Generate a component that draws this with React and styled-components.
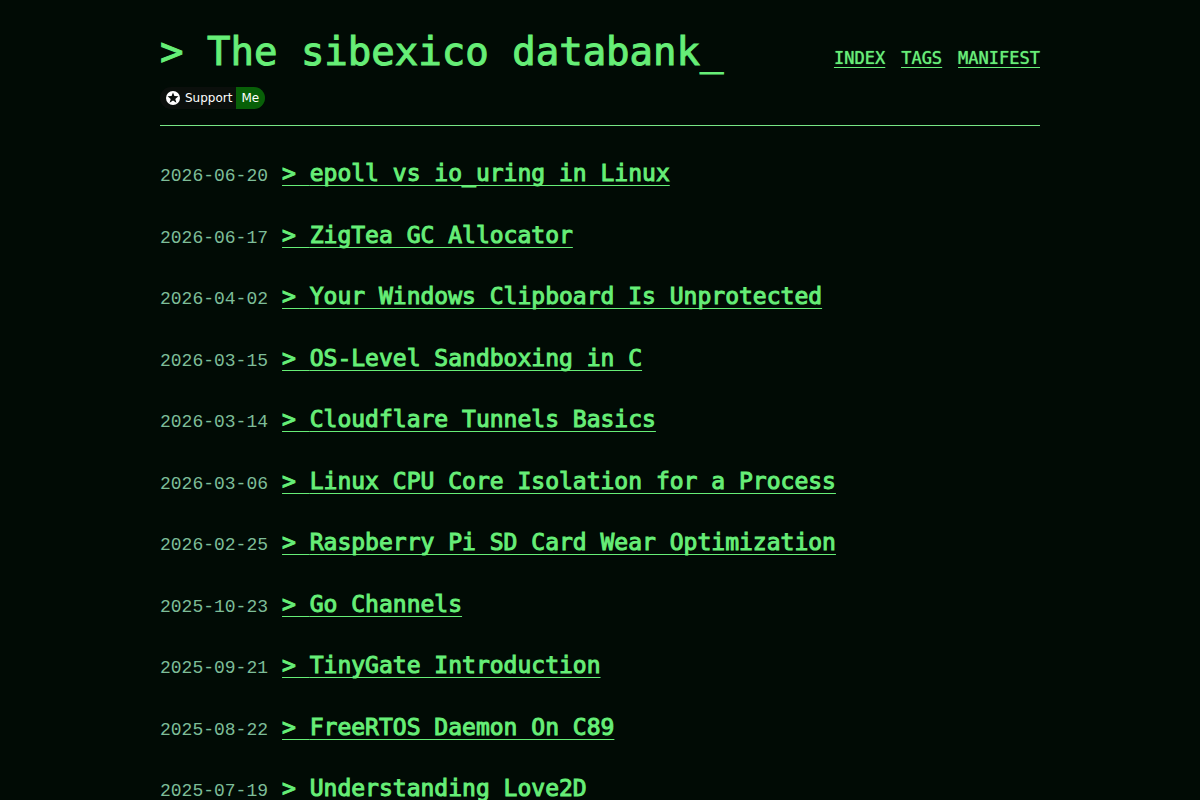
import React from "react";
import styled, { createGlobalStyle } from "styled-components";

const posts = [
  ["2026-06-20", "epoll vs io_uring in Linux"],
  ["2026-06-17", "ZigTea GC Allocator"],
  ["2026-04-02", "Your Windows Clipboard Is Unprotected"],
  ["2026-03-15", "OS-Level Sandboxing in C"],
  ["2026-03-14", "Cloudflare Tunnels Basics"],
  ["2026-03-06", "Linux CPU Core Isolation for a Process"],
  ["2026-02-25", "Raspberry Pi SD Card Wear Optimization"],
  ["2025-10-23", "Go Channels"],
  ["2025-09-21", "TinyGate Introduction"],
  ["2025-08-22", "FreeRTOS Daemon On C89"],
  ["2025-07-19", "Understanding Love2D"],
];

const GlobalStyle = createGlobalStyle`
  *, *::before, *::after { box-sizing: border-box; }
  html { background: #010b05; scrollbar-width: none; }
  body {
    margin: 0;
    color: #66ee77;
    font-family: "DejaVu Sans Mono", "Liberation Mono", monospace;
    font-size: 17px;
    line-height: 1.5;
  }
  a { color: inherit; }
`;

const Page = styled.div`
  max-width: 912px;
  margin: 0 auto;
  padding: 24px 16px;
`;

const Header = styled.header`
  padding-bottom: 16px;
  border-bottom: 1px solid #77e685;
`;

const HeaderRow = styled.div`
  display: flex;
  flex-wrap: wrap;
  align-items: center;
  justify-content: space-between;
  column-gap: 16px;
`;

const SiteTitle = styled.h1`
  margin: 0;
  font-size: 39px;
  font-weight: 400;
  line-height: 56px;
  -webkit-text-stroke: 1px currentColor;
`;

const Nav = styled.nav`
  display: flex;
  gap: 16px;
  padding-top: 14px;
`;

const TextLink = styled.a`
  text-decoration: underline 1px;
  text-decoration-skip-ink: none;
  text-underline-offset: ${(p) => (p.$large ? "4px" : "3px")};
  -webkit-text-stroke: ${(p) => (p.$large ? "1px currentColor" : "0")};
  text-shadow: ${(p) => (p.$large ? "none" : "0 0 1px currentColor")};
`;

const SupportLink = styled.a`
  display: inline-flex;
  align-items: center;
  height: 22px;
  margin-top: 7px;
  border-radius: 11px;
  overflow: hidden;
  background: #0b0f0c;
  color: #fff;
  font: 12px/22px "DejaVu Sans", sans-serif;
  text-decoration: none;
  vertical-align: top;
`;

const SupportLabel = styled.span`
  display: flex;
  align-items: center;
  gap: 5px;
  padding: 0 4px 0 6px;
`;

const SupportTarget = styled.span`
  padding: 0 6px 0 5px;
  background: #086008;
`;

const PostList = styled.ul`
  display: grid;
  gap: 27px;
  margin: 0;
  padding: 30px 0 0;
  list-style: none;
`;

const Post = styled.li`
  display: flex;
  align-items: baseline;
  gap: 14px;
`;

const PostDate = styled.time`
  flex: none;
  color: #7dbd98;
  font-family: "Liberation Mono", monospace;
  font-size: 18px;
`;

const PostTitle = styled.h2`
  margin: 0;
  font-size: 23px;
  font-weight: 400;
`;

function StarBadge() {
  return (
    <svg width="14" height="14" viewBox="0 0 14 14" aria-hidden="true">
      <circle cx="7" cy="7" r="7" fill="#fff" />
      <path
        d="M7 1.4 8.4 5 12.4 5.3 9.3 7.9 10.4 11.8 7 9.6 3.6 11.8 4.7 7.9 1.6 5.3 5.6 5Z"
        fill="#0b0f0c"
      />
    </svg>
  );
}

export default function App() {
  return (
    <>
      <GlobalStyle />
      <Page>
        <Header>
          <HeaderRow>
            <SiteTitle>&gt; The sibexico databank_</SiteTitle>
            <Nav aria-label="Main">
              <TextLink href="#index">INDEX</TextLink>
              <TextLink href="#tags">TAGS</TextLink>
              <TextLink href="#manifest">MANIFEST</TextLink>
            </Nav>
          </HeaderRow>
          <SupportLink href="#support">
            <SupportLabel>
              <StarBadge />
              Support
            </SupportLabel>
            <SupportTarget>Me</SupportTarget>
          </SupportLink>
        </Header>
        <main>
          <PostList>
            {posts.map(([date, title]) => (
              <Post key={date}>
                <PostDate dateTime={date}>{date}</PostDate>
                <PostTitle>
                  <TextLink $large href={"#" + date}>&gt; {title}</TextLink>
                </PostTitle>
              </Post>
            ))}
          </PostList>
        </main>
      </Page>
    </>
  );
}
